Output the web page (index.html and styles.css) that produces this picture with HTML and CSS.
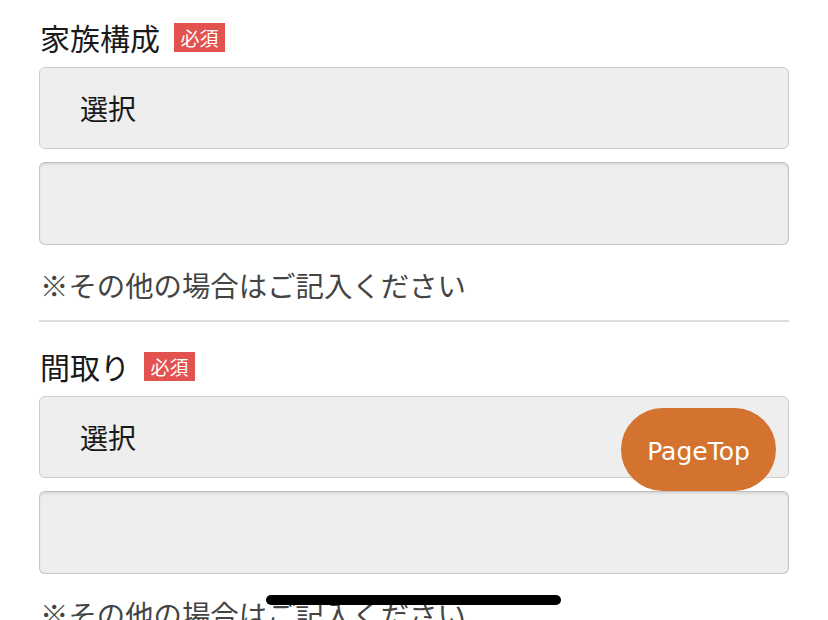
FILE: index.html
```html
<!DOCTYPE html>
<html lang="ja">
<head>
<meta charset="utf-8">
<link rel="stylesheet" href="styles.css">
</head>
<body>
<div class="page">
  <section class="field">
    <div class="label"><span class="label-text">家族構成</span><span class="badge">必須</span></div>
    <div class="select">選択</div>
    <div class="textarea"></div>
    <p class="note">※その他の場合はご記入ください</p>
  </section>
  <hr class="divider">
  <section class="field">
    <div class="label"><span class="label-text">間取り</span><span class="badge">必須</span></div>
    <div class="select">選択</div>
    <div class="textarea"></div>
    <p class="note">※その他の場合はご記入ください</p>
  </section>
</div>
<a class="pagetop">PageTop</a>
<div class="home-indicator"></div>
</body>
</html>
```
FILE: styles.css
```css
html, body {
  margin: 0;
  padding: 0;
  background: #fff;
  overflow: hidden;
}
body {
  width: 828px;
  height: 620px;
  position: relative;
  font-family: "Noto Sans CJK JP", "Noto Sans", sans-serif;
  color: #222;
}
.page {
  padding: 17px 39px 0 39px;
}
.field {
  display: flex;
  flex-direction: column;
}
.label {
  display: flex;
  align-items: center;
  height: 40px;
  margin-bottom: 10px;
}
.label-text {
  font-size: 30px;
  line-height: 40px;
  margin-left: 1px;
  color: #1a1a1a;
}
.badge {
  display: inline-flex;
  align-items: center;
  justify-content: center;
  margin-left: 14px;
  width: 51px;
  height: 29px;
  background: #e2524f;
  color: #fff;
  font-size: 19px;
  line-height: 29px;
}
.select {
  box-sizing: border-box;
  height: 82px;
  background: #eeeeee;
  border: 1px solid #cdcdcd;
  border-radius: 6px;
  padding-left: 40px;
  display: flex;
  align-items: center;
  font-size: 28px;
  color: #1a1a1a;
}
.textarea {
  box-sizing: border-box;
  height: 83px;
  margin-top: 13px;
  background: #eeeeee;
  border: 1px solid #c4c4c4;
  border-top-color: #bdbdbd;
  border-radius: 6px;
  box-shadow: inset 0 2px 2px rgba(0, 0, 0, 0.08);
}
.note {
  margin: 20px 0 0 1px;
  font-size: 28.4px;
  line-height: 40px;
  color: #444;
}
.divider {
  margin: 15px 0 24px 0;
  border: 0;
  height: 2px;
  background: #dddddd;
}
.pagetop {
  position: absolute;
  left: 621px;
  top: 408px;
  width: 155px;
  height: 83px;
  box-sizing: border-box;
  padding-top: 4px;
  border-radius: 42px;
  background: #d4732f;
  color: #fff;
  font-family: "DejaVu Sans", sans-serif;
  font-size: 25px;
  display: flex;
  align-items: center;
  justify-content: center;
}
.home-indicator {
  position: absolute;
  left: 266px;
  top: 595px;
  width: 295px;
  height: 10px;
  border-radius: 5px;
  background: #000;
}
```
